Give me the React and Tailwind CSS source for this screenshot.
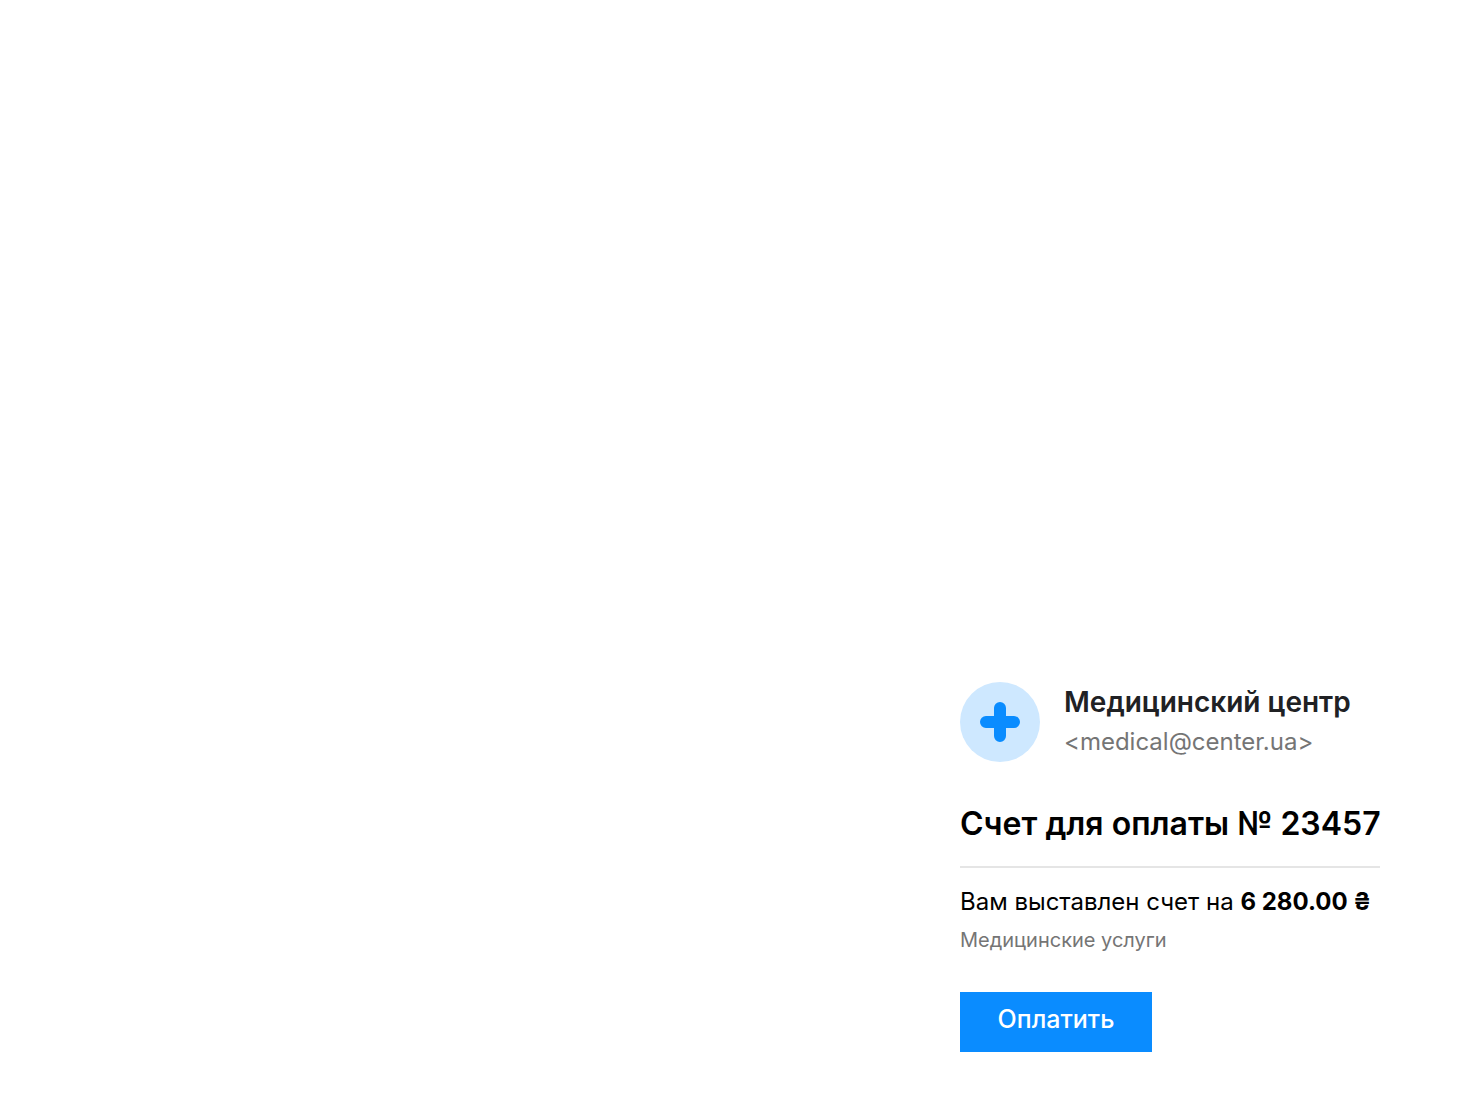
export default function App() {
  return (
    <main className="flex min-h-screen items-end justify-end bg-white px-25 pb-12 font-['Inter',sans-serif] text-black">
      <article className="w-[420px] whitespace-nowrap">
        <header className="flex items-center gap-6">
          <svg viewBox="0 0 80 80" className="size-20 shrink-0" aria-hidden="true">
            <circle cx="40" cy="40" r="40" fill="#cee8ff" />
            <path d="M40 26v28M26 40h28" stroke="#0a8cff" strokeWidth="12" strokeLinecap="round" />
          </svg>
          <div>
            <h2 className="text-[28px] leading-10 font-semibold text-[#202124]">Медицинский центр</h2>
            <p className="text-[24px] leading-10 text-[#757575]">&lt;medical@center.ua&gt;</p>
          </div>
        </header>
        <h1 className="mt-10 border-b-2 border-[#e5e5e5] pb-5 text-[32px] leading-11 font-semibold">Счет для оплаты № 23457</h1>
        <p className="mt-4 text-[24px] leading-9">
          Вам выставлен счет на <strong className="font-bold">6 280.00 ₴</strong>
        </p>
        <p className="text-[20px] leading-10 text-[#757575]">Медицинские услуги</p>
        <button type="button" className="mt-8 h-15 w-48 cursor-pointer bg-[#0a8cff] pb-1 text-[25px] font-medium text-white">Оплатить</button>
      </article>
    </main>
  );
}
